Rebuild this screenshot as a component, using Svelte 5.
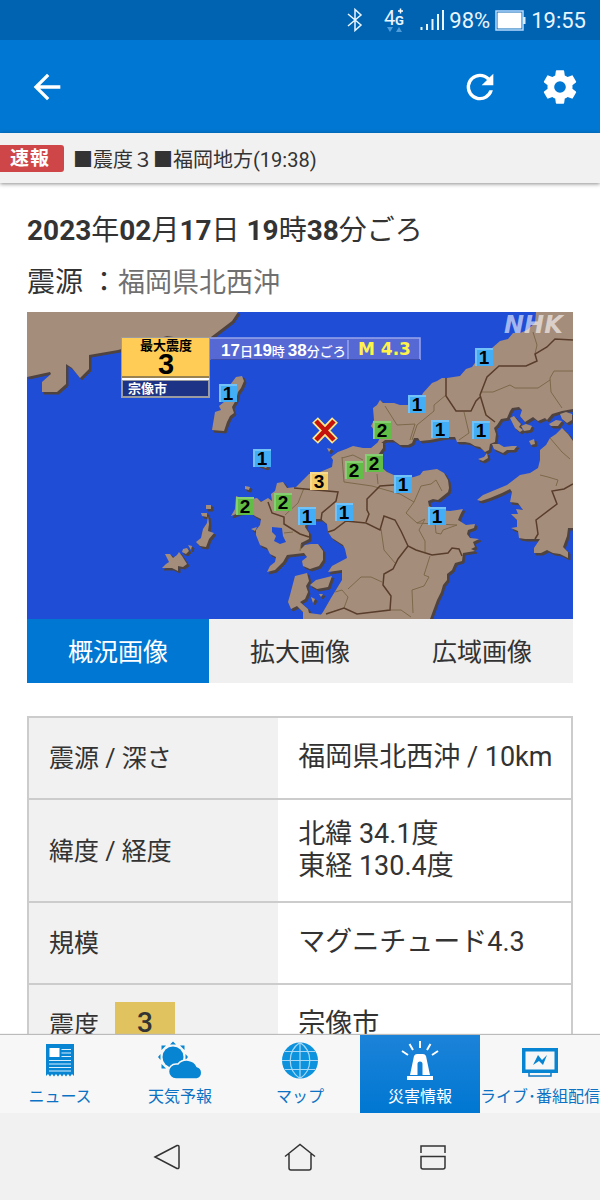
<script>
  let activeView = $state(0);
  let activeTab = $state("saigai");

  const views = ["概況画像", "拡大画像", "広域画像"];

  const tabs = [
    { id: "news", label: "ニュース" },
    { id: "weather", label: "天気予報" },
    { id: "map", label: "マップ" },
    { id: "saigai", label: "災害情報" },
    { id: "live", label: "ライブ･番組配信" },
  ];

  const markers = [
    { x: 484, y: 357, level: 1 },
    { x: 417, y: 404, level: 1 },
    { x: 440, y: 429, level: 1 },
    { x: 481, y: 430, level: 1 },
    { x: 228, y: 393, level: 1 },
    { x: 262, y: 458, level: 1 },
    { x: 307, y: 516, level: 1 },
    { x: 344, y: 512, level: 1 },
    { x: 403, y: 484, level: 1 },
    { x: 437, y: 516, level: 1 },
    { x: 382, y: 430, level: 2 },
    { x: 354, y: 470, level: 2 },
    { x: 374, y: 463, level: 2 },
    { x: 283, y: 502, level: 2 },
    { x: 245, y: 506, level: 2 },
    { x: 319, y: 481, level: 3 },
  ];

  const land = [
    // Korea
    "M27 312H238L232 321L211 337L208 342L180 338L167 336L118 350L89 355V369L80 378L72 368L66 364V384L57 392H42V382L51 374L50 372L27 377Z",
    // Tsushima
    "M236 377L242 376L244 381L241 388L238 392L236 400L232 407L234 413L230 416L227 422L224 431L212 430L215 412L221 410L219 406L224 402L230 385Z",
    // Honshu
    "M536 312L535 323L527 330L520 333H513L508 339L500 341L492 348L489 354L477 360L472 367L466 369L460 376L447 378H442L437 381L432 383L423 393L420 399L417 405H400L394 403L383 403L380 400L377 405L373 408L374 420L371 426L377 434L380 438L375 447L380 444L385 440H393L400 445H408L412 443L414 438H418L420 441L430 440L440 438L446 437L455 437L457 442H465L470 443L475 446L480 447L485 452L489 450L490 444L495 442L496 434L494 428L497 425L501 419L507 418L510 411L512 408L519 407L522 410L520 416L525 422L533 417L538 421L545 418L547 420L552 414L562 411L573 409V312Z",
    "M510 418L514 416L518 421L521 424L519 427L523 430L520 432L515 428Z",
    "M521 426L526 424L532 426L530 430L524 431Z",
    "M549 424L556 420L562 421L558 426L551 426Z",
    "M560 414L566 412L572 414V420L567 423L562 419Z",
    "M492 444L499 444L504 447L512 446L517 446L514 450L507 450L503 453L494 449Z",
    "M478 459L484 457L487 453L488 458L483 461Z",
    "M529 441L534 439L535 444L531 445Z",
    // Shikoku
    "M573 441L568 434L562 428L556 434L550 438L546 445L540 450V460L538 468L530 473L520 475L507 485L495 490L483 495L477 500L481 501L490 498L502 493L510 489L512 492L510 502L518 503L523 510L516 509L518 514L511 514L517 520V527L511 528L518 531L519 538L525 539L540 539L534 548L534 553L541 553L547 550L553 553L560 554L568 558V552L563 547L567 536L568 528H573Z",
    // Kyushu
    "M383 443V448L378 455L380 466L387 472L396 476L407 478L414 477L420 475L423 471L430 470L437 469L444 473L448 480L449 488L448 492L443 496L438 500L433 499L428 501L429 506L437 510L450 511L457 510L463 509L460 515L458 520L466 525L475 524L474 528L468 530L467 534L470 538L479 539L473 542L475 547L471 549L475 551L463 553L462 561L455 563L452 570L447 574V580L443 585L441 592L437 600L430 619H318L323 612L331 598L342 580L342 570L328 572L332 566L347 558L345 549L343 545L332 538L328 532L327 524L321 519H313L306 523L305 527L309 533V539L301 543L301 549L305 545L311 544L318 544L323 551L323 560L319 566L310 569L303 566L302 561L307 557L304 553L287 555L283 562L275 570L267 572L270 566L275 562L276 557L270 554L267 548L260 545L256 535V530L260 525L261 519L255 516L250 512L239 513L231 516L235 509L236 496L246 500L257 498L261 502L268 498L272 501L271 494L275 491L277 483L283 482L287 488L296 487L303 480L309 474L320 472L332 467L333 460L331 457L338 452L346 449L353 446L363 448L371 448L377 443Z",
    "M295 576L307 573L309 581L306 586L308 592L305 599L300 602L308 609L309 613L324 615V619H303V612L297 606L291 609L288 602L290 595Z",
    "M310 585L316 580L332 576L328 587L317 589Z",
    // Goto
    "M165 554L170 554L173 558L177 555L179 552L182 556L187 564L183 567L178 566L178 571L172 568L162 568L166 564L169 562Z",
    "M183 549L187 548L189 551L186 554L182 552Z",
    "M188 545L192 546L191 550Z",
    "M196 542L201 538L203 529L207 523L208 516L209 524L208 531L214 533L209 539L206 547L200 546Z",
    "M206 505L211 505V509L206 509Z",
    "M201 513L207 513V517L202 516Z",
    "M245 486L250 487L249 490L245 489Z",
    "M251 529L257 527L255 531Z",
    "M311 597L315 599L313 603Z",
    "M319 594L323 594L321 597Z",
    "M327 448L331 449L329 452Z",
    "M258 465L268 466L266 468Z",
  ];

  const prefBorders = [
    "M573 340L555 339L547 347L535 354L537 361L526 366L499 366L487 377L480 395L486 415L495 422",
    "M446 378L446 396L456 411L471 411L476 401L480 397",
    "M294 488L338 492L336 501L322 513L321 520",
    "M268 502L272 513L284 517L284 524L300 534L309 537",
    "M407 484L380 486L367 499L367 510L369 514L366 522",
    "M328 532L334 530L346 521L366 523L380 530L384 516L395 520L401 531L408 546L416 550L432 555L448 553L452 548L459 549L462 556",
    "M408 546L398 559L393 569L384 574L383 585L391 596L390 610L357 614L344 608L326 614",
    "M573 484L564 489L552 491L557 504L536 520L538 534L535 539",
  ];

  const areaBorders = [
    "M533 332L537 345L535 354",
    "M482 392H493L510 385L515 388L538 388L550 380",
    "M573 371L554 371L550 378L551 392L562 408",
    "M446 395L434 405L434 411L417 425L412 440",
    "M385 406L397 425L415 424L410 440",
    "M464 412L469 433L459 440",
    "M540 475L548 477L558 480L556 486",
    "M550 438L562 452L570 459",
    "M304 488L298 503L285 515",
    "M342 457L344 482L372 486L400 494L414 502",
    "M342 458L353 455L363 460M377 474L378 484",
    "M414 502L406 513L417 523L425 519L419 530L425 541L425 552M417 523L457 525L443 530L441 534L436 533L435 523",
    "M414 502L421 486L431 484L436 480L442 491",
    "M381 529L384 550L395 563M430 556L424 575L429 577L424 586L412 590L413 613",
    "M344 608L348 597L342 590L335 592M348 589L361 577L371 577L382 582M390 610L401 610L411 617",
    "M284 533L293 532M301 544L300 551",
  ];
</script>

<div class="screen">
  <div class="status">
    <svg width="16" height="24" viewBox="0 0 16 24" class="bluetooth">
      <path d="M1 6L14 17L8 22.500V1.500L14 7L1 18" />
    </svg>
    <svg width="22" height="26" viewBox="0 0 22 26" class="network">
      <text x="0" y="18" font-size="20">4</text>
      <text x="11" y="18" font-size="13" font-weight="bold">G</text>
      <path d="M14 4H19M16.500 1.500V6.500" stroke="#fff" stroke-width="1.500" />
      <path d="M3 20H9L6 25ZM12 25H18L15 20Z" fill="#4f9ddb" />
    </svg>
    <svg width="24" height="22" viewBox="0 0 24 22" class="signal">
      <path d="M1.500 18V21M7 15V21M12.500 10V21M18 5V21M23 1V21" />
    </svg>
    <span>98%</span>
    <svg width="31" height="21" viewBox="0 0 31 21" class="battery">
      <rect x="1" y="1" width="27" height="19" fill="none" stroke="#b8dcff" stroke-width="1.500" />
      <rect x="2.500" y="2.500" width="24" height="16" fill="#fff" />
      <rect x="28" y="7" width="2.500" height="7" fill="#d8edff" />
    </svg>
    <span class="clock">19:55</span>
  </div>

  <header>
    <button class="back" aria-label="戻る">
      <svg width="40" height="40" viewBox="0 0 24 24">
        <path d="M20 11H7.830l5.590-5.590L12 4l-8 8 8 8 1.410-1.410L7.830 13H20v-2z" />
      </svg>
    </button>
    <button aria-label="更新">
      <svg width="40" height="40" viewBox="0 0 24 24">
        <path d="M17.650 6.350A7.950 7.950 0 0 0 12 4a8 8 0 1 0 7.730 10h-2.080A6 6 0 1 1 12 6c1.660 0 3.140.690 4.220 1.780L13 11h7V4z" />
      </svg>
    </button>
    <button aria-label="設定">
      <svg width="40" height="40" viewBox="0 0 24 24">
        <path d="M19.430 12.980c.040-.320.070-.640.070-.980s-.030-.660-.070-.980l2.110-1.650c.190-.150.240-.420.120-.640l-2-3.460c-.120-.220-.390-.300-.610-.220l-2.490 1c-.520-.400-1.080-.730-1.690-.980l-.380-2.650A.49.49 0 0 0 14 2h-4c-.250 0-.460.180-.490.420l-.380 2.650c-.610.250-1.170.590-1.690.980l-2.490-1c-.230-.090-.490 0-.610.220l-2 3.460c-.130.220-.070.490.120.640l2.110 1.650c-.040.320-.070.650-.070.980s.030.660.070.980l-2.110 1.650c-.190.150-.240.420-.120.640l2 3.460c.120.220.390.300.610.220l2.490-1c.520.400 1.080.730 1.690.980l.380 2.650c.030.240.240.420.490.420h4c.250 0 .460-.180.490-.420l.380-2.650c.610-.250 1.170-.590 1.690-.980l2.490 1c.230.090.490 0 .610-.220l2-3.460c.120-.220.070-.490-.120-.640l-2.110-1.650zM12 15.500a3.500 3.500 0 1 1 0-7 3.500 3.500 0 0 1 0 7z" />
      </svg>
    </button>
  </header>

  <div class="ticker">
    <strong>速報</strong>
    <a href="#quake">■震度３■福岡地方(19:38)</a>
  </div>

  <main id="quake">
    <h1><b>2023</b>年<b>02</b>月<b>17</b>日 <b>19</b>時<b>38</b>分ごろ</h1>
    <p class="source">震源 ：<span>福岡県北西沖</span></p>

    <svg class="map" viewBox="27 312 546 307" role="img" aria-label="各地の震度">
      <rect x="27" y="312" width="546" height="307" fill="#204dd6" />
      <g class="shade" transform="translate(2 2)">
        {#each land as d}
          <path {d} />
        {/each}
      </g>
      <g class="land">
        {#each land as d}
          <path {d} />
        {/each}
      </g>
      <path d="M272 527L282 528L283 536L286 542L280 544L274 541L276 536L272 532Z" fill="#204dd6" />
      <g class="area">
        {#each areaBorders as d}
          <path {d} />
        {/each}
      </g>
      <g class="pref">
        {#each prefBorders as d}
          <path {d} />
        {/each}
      </g>

      <path d="M315 420L335 441M335 420L315 441" stroke="#ffe98a" stroke-width="8" />
      <path d="M316 421L334 440M334 421L316 440" stroke="#c4120c" stroke-width="4.500" />

      {#each markers as m}
        <g class="marker level{m.level}">
          <rect x={m.x - 9} y={m.y - 9} width="18" height="18" />
          <path d="M{m.x - 8} {m.y + 9}V{m.y - 8}H{m.x + 9}" />
          <text x={m.x} y={m.y + 7}>{m.level}</text>
        </g>
      {/each}

      <rect x="210" y="338" width="210" height="22" fill="#5568d4" />
      <path d="M210 338H420V360M348 340V360" fill="none" stroke="#98a5ea" stroke-width="1.500" />
      <path d="M211 359.500H420" stroke="#3c4caa" />
      <text x="221" y="356" fill="#fff" font-size="13" class="jp time">
        <tspan class="num">17</tspan>日<tspan class="num">19</tspan>時 <tspan class="num">38</tspan>分ごろ
      </text>
      <text x="358" y="355" class="magnitude">M 4.3</text>

      <rect x="121" y="337" width="89" height="61" fill="#9b9ca0" />
      <rect x="122" y="338" width="87" height="38" fill="#ffcd55" />
      <path d="M122 377H209" stroke="#9a7a34" stroke-width="1.500" />
      <path d="M122 379H209" stroke="#fff" stroke-width="2" />
      <rect x="123" y="381" width="85" height="15" fill="#1d3486" />
      <text x="166" y="350" font-size="13" text-anchor="middle" class="jp">最大震度</text>
      <text x="166" y="374" font-size="29" text-anchor="middle" class="max">3</text>
      <text x="128" y="393" font-size="13" fill="#fff" class="jp">宗像市</text>

      <text x="504" y="333" class="nhk">NHK</text>
    </svg>

    <div class="views">
      {#each views as view, i}
        <button class:active={activeView === i} onclick={() => (activeView = i)}>{view}</button>
      {/each}
    </div>

    <table>
      <tbody>
        <tr>
          <th scope="row">震源 / 深さ</th>
          <td>福岡県北西沖 / 10km</td>
        </tr>
        <tr class="tall">
          <th scope="row">緯度 / 経度</th>
          <td>北緯 34.1度<br />東経 130.4度</td>
        </tr>
        <tr>
          <th scope="row">規模</th>
          <td>マグニチュード4.3</td>
        </tr>
        <tr>
          <th scope="row"><div class="intensity">震度<span>3</span></div></th>
          <td>宗像市</td>
        </tr>
      </tbody>
    </table>
  </main>

  <nav class="tabs">
    {#each tabs as tab}
      <button class:active={activeTab === tab.id} onclick={() => (activeTab = tab.id)}>
        <svg width="48" height="40" viewBox="0 0 48 40">
          {#if tab.id === "news"}
            <path d="M10 3H38V35L36 33L34 35.500L32 33L30 35.500L28 33L26 35.500L24 33L22 35.500L20 33L18 35.500L16 33L14 35.500L12 33L10 35Z" />
            <rect x="13.500" y="7" width="10" height="9" fill="#fff" />
            <path d="M25.500 8.500H35M25.500 12H35M25.500 15.500H35M13 19.500H35M13 23H35M13 26.500H35M13 30H35" stroke="#d9efff" stroke-width="1.200" />
          {:else if tab.id === "weather"}
            <circle cx="17" cy="16" r="10.500" />
            <path d="M14 3.500L17 0.500L20 3.500ZM14 28.500H20L17 31ZM4.500 13V19L2 16ZM29.500 13V19L32 16ZM5.500 4.500H10L5.500 9ZM28.500 4.500V9L24 4.500ZM5.500 27.500V23L10 27.500Z" />
            <path class="cloud" d="M20 38a7.500 7.500 0 0 1 0-15h2a11 10 0 0 1 19 2.500a6.500 6.500 0 0 1 0 12.500Z" />
          {:else if tab.id === "map"}
            <circle cx="24" cy="19.500" r="18" fill="#0d93de" />
            <path d="M24 1.500V37.500M6 19.500H42M9 10.500H39M9 28.500H39M24 1.500C11 10 11 29 24 37.500M24 1.500C37 10 37 29 24 37.500" fill="none" stroke="#a7d8f5" stroke-width="1.200" />
          {:else if tab.id === "saigai"}
            <path d="M14 34L18 15Q19 13 21 13H27Q29 13 30 15L34 34ZM21.500 34H26.500V23Q26.500 20.500 24 20.500T21.500 23Z" fill-rule="evenodd" />
            <rect x="11" y="35" width="26" height="4" />
            <path d="M24 0V7M13.500 3L17 9M34.500 3L31 9M6 10L12 14M42 10L36 14" stroke="#fff" stroke-width="2" />
          {:else}
            <path d="M6 7H42V32H6ZM9.500 10.500V28.500H38.500V10.500Z" fill-rule="evenodd" />
            <path d="M13 32V35H35V32" fill="none" stroke="#1278c4" stroke-width="1.500" />
            <path d="M17 24L22 14L26 19L31 14L27 24L23 20Z" />
          {/if}
        </svg>
        <span>{tab.label}</span>
      </button>
    {/each}
  </nav>

  <nav class="system">
    <button aria-label="バック">
      <svg width="32" height="32" viewBox="0 0 32 32">
        <path d="M4 16L26 4.500Q28 4 28 6V26Q28 28 26 27.500Z" />
      </svg>
    </button>
    <button aria-label="ホーム">
      <svg width="32" height="32" viewBox="0 0 32 32">
        <path d="M1 15.500L16 3.500L31 15.500M5 13V27Q5 29 7 29H25Q27 29 27 27V13" />
      </svg>
    </button>
    <button aria-label="履歴">
      <svg width="32" height="32" viewBox="0 0 32 32">
        <path d="M4 12V5H28V12M4 15.500H28V26Q28 28 26 28H6Q4 28 4 26Z" />
      </svg>
    </button>
  </nav>
</div>

<style>
  :global(body) {
    margin: 0;
  }
  .screen {
    display: flex;
    flex-direction: column;
    height: 100vh;
    background: #fff;
    color: #333;
    font-family: Roboto, "Noto Sans CJK JP", sans-serif;
  }
  button {
    border: none;
    padding: 0;
    background: none;
    font-family: inherit;
    cursor: pointer;
  }
  svg {
    display: block;
  }

  .status {
    display: flex;
    align-items: center;
    justify-content: flex-end;
    flex: none;
    height: 40px;
    padding-right: 14px;
    background: #0063b1;
    color: #e9f5ff;
    font-size: 22px;
  }
  .bluetooth {
    margin-right: 21px;
    fill: none;
    stroke: #e9f5ff;
    stroke-width: 1.5;
  }
  .network {
    margin-right: 14px;
    fill: #e9f5ff;
  }
  .signal {
    margin-right: 5px;
    stroke: #e9f5ff;
    stroke-width: 2;
  }
  .battery {
    margin: 0 5px;
  }

  header {
    display: flex;
    align-items: center;
    flex: none;
    gap: 40px;
    height: 93px;
    padding: 0 20px 0 27px;
    background: #0077d2;
  }
  header svg {
    fill: #fff;
  }
  .back {
    margin-right: auto;
  }

  .ticker {
    display: flex;
    align-items: center;
    flex: none;
    gap: 9px;
    height: 50px;
    background: #f1f1f1;
    box-shadow: 0 1px 4px rgba(0, 0, 0, 0.45);
    z-index: 1;
  }
  .ticker strong {
    padding: 0 14px 0 10px;
    border-radius: 0 3px 3px 0;
    background: #cf4648;
    color: #fff;
    font-size: 19px;
    line-height: 27px;
    letter-spacing: 1px;
  }
  .ticker a {
    color: #333;
    font-size: 20px;
    text-decoration: none;
  }

  main {
    flex: 1;
    min-height: 0;
    padding: 27px 27px 0;
    overflow-y: auto;
    scrollbar-width: none;
  }
  h1 {
    margin: 0;
    font-size: 28px;
    font-weight: 400;
    line-height: 42px;
  }
  .source {
    margin: 9px 0 7px;
    font-size: 28px;
    line-height: 43px;
  }
  .source span {
    color: #707070;
    font-size: 27px;
  }

  .map {
    width: 100%;
    height: auto;
  }
  .shade path {
    fill: #4f433f;
    stroke: #4f433f;
  }
  .land path {
    fill: #a58d7c;
  }
  .area path {
    fill: none;
    stroke: #7c694a;
  }
  .pref path {
    fill: none;
    stroke: #593d2b;
    stroke-width: 1.5;
  }
  .marker path {
    fill: none;
    stroke: #fff;
    stroke-opacity: 0.25;
    stroke-width: 2;
  }
  .marker text {
    font-family: "Liberation Sans", sans-serif;
    font-size: 19px;
    font-weight: bold;
    text-anchor: middle;
  }
  .level1 rect {
    fill: #43aef5;
  }
  .level2 rect {
    fill: #61bd45;
  }
  .level3 rect {
    fill: #f4cd68;
  }
  .jp {
    font-family: "Noto Sans CJK JP", sans-serif;
    font-weight: bold;
  }
  .time {
    font-weight: 500;
  }
  .num {
    font-family: "Liberation Sans", sans-serif;
    font-size: 17px;
    font-weight: bold;
  }
  .max {
    font-family: "Liberation Sans", sans-serif;
    font-weight: bold;
  }
  .magnitude {
    fill: #fff34a;
    font-family: "DejaVu Sans", sans-serif;
    font-size: 17px;
    font-weight: bold;
  }
  .nhk {
    fill: #fff;
    fill-opacity: 0.6;
    font-family: "DejaVu Sans", sans-serif;
    font-size: 24px;
    font-style: italic;
    font-weight: bold;
  }

  .views {
    display: flex;
    margin-bottom: 33px;
    background: #f0f0f0;
  }
  .views button {
    flex: 1;
    height: 64px;
    padding-bottom: 3px;
    color: #333;
    font-size: 25px;
  }
  .views .active {
    background: #0077d2;
    color: #fff;
  }

  table {
    width: 100%;
    border: 2px solid #ccc;
    border-collapse: collapse;
  }
  tr {
    height: 82px;
    border-bottom: 2px solid #ccc;
  }
  .tall {
    height: 103px;
  }
  th {
    width: 46%;
    padding: 0 20px 4px;
    box-sizing: border-box;
    background: #f1f1f1;
    font-size: 25px;
    font-weight: 400;
    text-align: left;
  }
  td {
    padding: 0 10px 2px 20px;
    font-size: 27px;
    line-height: 32px;
  }
  .intensity {
    display: flex;
    align-items: center;
    gap: 16px;
  }
  .intensity span {
    width: 60px;
    background: #e0c25f;
    font-size: 28px;
    font-weight: 500;
    line-height: 42px;
    text-align: center;
  }

  .tabs {
    display: flex;
    flex: none;
    height: 78px;
    background: #f7f7f7;
    box-shadow: 0 -1px 1px #bbb;
    z-index: 1;
  }
  .tabs button {
    display: flex;
    flex: 1 1 0;
    flex-direction: column;
    align-items: center;
    gap: 3px;
    min-width: 0;
    padding-top: 6px;
    color: #0b72c4;
    font-size: 16px;
    line-height: 26px;
    white-space: nowrap;
  }
  .tabs svg {
    fill: #0784d2;
  }
  .cloud {
    stroke: #f7f7f7;
    stroke-width: 1.5;
  }
  .tabs .active {
    background: linear-gradient(#1c83d8, #0077d2);
    color: #fff;
  }
  .tabs .active svg {
    fill: #fff;
  }

  .system {
    display: flex;
    align-items: center;
    justify-content: center;
    flex: none;
    gap: 101px;
    height: 87px;
    background: #f1f1f1;
  }
  .system svg {
    fill: none;
    stroke: #333;
    stroke-width: 1.5;
  }
</style>
